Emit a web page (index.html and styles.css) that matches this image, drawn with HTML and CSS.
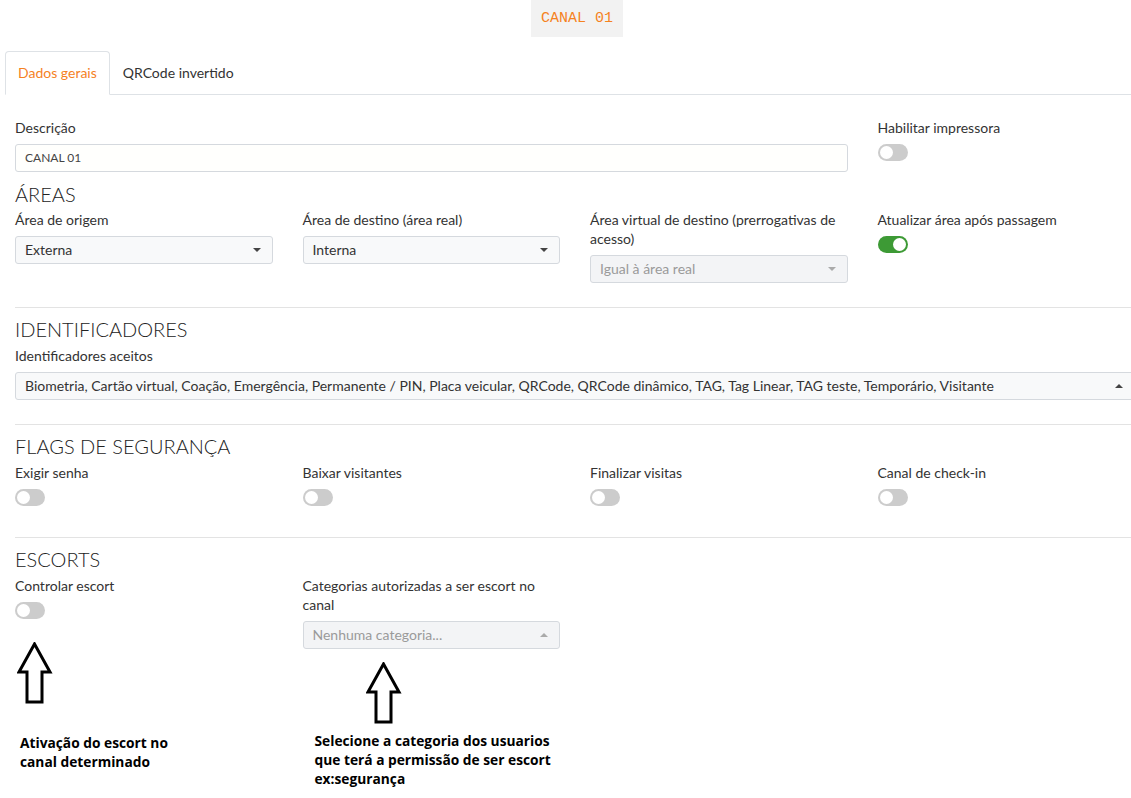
FILE: index.html
```html
<!DOCTYPE html>
<html lang="pt-BR">
<head>
    <meta charset="UTF-8">
    <meta name="viewport" content="width=device-width, initial-scale=1.0">
    <title>Canal 01</title>
    <link rel="stylesheet" href="styles.css">
</head>
<body>
    <div class="page">
        <!-- Cabeçalho com o nome do canal -->
        <div class="channel-bar">
            <div class="channel">CANAL 01</div>
        </div>

        <!-- Abas -->
        <div class="tabs">
            <div class="tab active">Dados gerais</div>
            <div class="tab">QRCode invertido</div>
        </div>

        <div class="tab-content">
            <div class="row">
                <div class="col span-3">
                    <label class="label">Descrição</label>
                    <div class="input">CANAL 01</div>
                </div>
                <div class="col">
                    <label class="label">Habilitar impressora</label>
                    <div class="switch-wrap"><span class="switch"></span></div>
                </div>
            </div>

            <!-- Áreas -->
            <div class="row">
                <div class="col span-4">
                    <h2 class="section-title first">ÁREAS</h2>
                </div>
                <div class="col">
                    <label class="label">Área de origem</label>
                    <div class="select">Externa<span class="caret"></span></div>
                </div>
                <div class="col">
                    <label class="label">Área de destino (área real)</label>
                    <div class="select">Interna<span class="caret"></span></div>
                </div>
                <div class="col">
                    <label class="label">Área virtual de destino (prerrogativas de acesso)</label>
                    <div class="select disabled">Igual à área real<span class="caret"></span></div>
                </div>
                <div class="col">
                    <label class="label">Atualizar área após passagem</label>
                    <div class="switch-wrap"><span class="switch on"></span></div>
                </div>
            </div>

            <!-- Identificadores -->
            <div class="row">
                <div class="col span-4">
                    <hr class="divider">
                    <h2 class="section-title">IDENTIFICADORES</h2>
                    <label class="label">Identificadores aceitos</label>
                    <div class="select">Biometria, Cartão virtual, Coação, Emergência, Permanente / PIN, Placa veicular, QRCode, QRCode dinâmico, TAG, Tag Linear, TAG teste, Temporário, Visitante<span class="caret up"></span></div>
                </div>
            </div>

            <!-- Flags de segurança -->
            <div class="row">
                <div class="col span-4">
                    <hr class="divider">
                    <h2 class="section-title">FLAGS DE SEGURANÇA</h2>
                </div>
                <div class="col">
                    <label class="label">Exigir senha</label>
                    <div class="switch-wrap"><span class="switch"></span></div>
                </div>
                <div class="col">
                    <label class="label">Baixar visitantes</label>
                    <div class="switch-wrap"><span class="switch"></span></div>
                </div>
                <div class="col">
                    <label class="label">Finalizar visitas</label>
                    <div class="switch-wrap"><span class="switch"></span></div>
                </div>
                <div class="col">
                    <label class="label">Canal de check-in</label>
                    <div class="switch-wrap"><span class="switch"></span></div>
                </div>
            </div>

            <!-- Escorts -->
            <div class="row">
                <div class="col span-4">
                    <hr class="divider">
                    <h2 class="section-title">ESCORTS</h2>
                </div>
                <div class="col">
                    <label class="label">Controlar escort</label>
                    <div class="switch-wrap"><span class="switch"></span></div>
                    <div class="note note-toggle">
                        <svg class="arrow" width="36" height="62" viewBox="0 0 36 62">
                            <polygon points="17.5,2 33,30 25,30 25,60 10,60 10,30 2,30" fill="none" stroke="#000" stroke-width="3" stroke-linejoin="miter"/>
                        </svg>
                        <p class="note-text">Ativação do escort no<br>canal determinado</p>
                    </div>
                </div>
                <div class="col">
                    <label class="label">Categorias autorizadas a ser escort no canal</label>
                    <div class="select disabled">Nenhuma categoria...<span class="caret up"></span></div>
                    <div class="note note-select">
                        <svg class="arrow" width="36" height="62" viewBox="0 0 36 62">
                            <polygon points="17.5,2 33,30 25,30 25,60 10,60 10,30 2,30" fill="none" stroke="#000" stroke-width="3" stroke-linejoin="miter"/>
                        </svg>
                        <p class="note-text">Selecione a categoria dos usuarios<br>que terá a permissão de ser escort<br>ex:segurança</p>
                    </div>
                </div>
            </div>
        </div>
    </div>
</body>
</html>
```

FILE: styles.css
```css
html, body {
    margin: 0;
    overflow: hidden; /* a página é mais larga que a janela */
    background-color: #ffffff;
}

body {
    font-family: 'Lato', 'Open Sans', sans-serif;
    font-size: 14px;
    color: #333333;
}

.page {
    width: 1150px;
}

/* Cabeçalho */
.channel-bar {
    display: flex;
    justify-content: center;
    padding-left: 4px;
}

.channel {
    background-color: #f2f2f2;
    color: #f5821f;
    font-family: 'Liberation Mono', monospace;
    font-size: 15px;
    height: 37px;
    line-height: 37px;
    padding: 0 10px;
}

/* Abas */
.tabs {
    display: flex;
    margin: 14px 0 0 5px;
    border-bottom: 1px solid #dee2e6;
}

.tab {
    height: 42px;
    line-height: 42px;
    padding: 0 12px;
    border: 1px solid transparent;
    border-radius: 4px 4px 0 0;
    margin-bottom: -1px;
    color: #333333;
}

.tab.active {
    color: #f5821f;
    background-color: #ffffff;
    border-color: #dee2e6 #dee2e6 #ffffff;
}

.tab-content {
    padding-top: 23px;
}

/* Grade de 4 colunas */
.row {
    display: grid;
    grid-template-columns: repeat(4, 287.5px);
}

.col {
    padding: 0 15px;
}

.span-3 {
    grid-column: span 3;
}

.span-4 {
    grid-column: span 4;
}

.label {
    display: block;
    line-height: 19px;
    margin-bottom: 7px;
    color: #333333;
}

.section-title {
    font-size: 20px;
    font-weight: 300;
    line-height: 22px;
    color: #222222;
    margin: 10px 0 6px;
}

.section-title.first {
    margin-top: 11px;
    margin-bottom: 5px;
}

.divider {
    border: 0;
    border-top: 1px solid #e3e3e3;
    margin: 24px 0 0;
}

/* Campos */
.input,
.select {
    box-sizing: border-box;
    height: 28px;
    line-height: 26px;
    padding: 0 9px;
    border: 1px solid #d5d9de;
    border-radius: 3px;
    white-space: nowrap;
}

.input {
    background-color: #fffffd;
    color: #444444;
    font-size: 12px;
}

.select {
    display: flex;
    align-items: center;
    background-color: #f8f9fa;
    color: #333333;
}

.select.disabled {
    background-color: #f3f4f6;
    color: #9a9a9a;
}

.caret {
    margin-left: auto;
    width: 0;
    height: 0;
    border-left: 4px solid transparent;
    border-right: 4px solid transparent;
    border-top: 4px solid #444444;
    margin-right: 2px;
}

.caret.up {
    border-top: 0;
    border-bottom: 4px solid #444444;
}

.select.disabled .caret {
    border-top-color: #aaaaaa;
}

.select.disabled .caret.up {
    border-bottom-color: #aaaaaa;
}

/* Interruptores */
.switch-wrap {
    height: 24px;
}

.switch {
    display: flex;
    align-items: center;
    box-sizing: border-box;
    width: 30px;
    height: 17px;
    padding: 0 2px;
    border-radius: 9px;
    background-color: #cccccc;
}

.switch::before {
    content: '';
    width: 13px;
    height: 13px;
    border-radius: 50%;
    background-color: #ffffff;
}

.switch.on {
    background-color: #3d9a35;
    justify-content: flex-end;
}

/* Anotações */
.arrow {
    display: block;
}

.note-toggle {
    margin: 16px 0 0 2px;
}

.note-toggle .note-text {
    margin: 29px 0 0 3px;
}

.note-select {
    margin: 13px 0 0 63px;
}

.note-select .note-text {
    margin: 7px 0 0 -51px;
}

.note-text {
    font-family: 'Open Sans', sans-serif;
    font-weight: 700;
    font-size: 13.75px;
    line-height: 19px;
    color: #000000;
    white-space: nowrap;
}
```
